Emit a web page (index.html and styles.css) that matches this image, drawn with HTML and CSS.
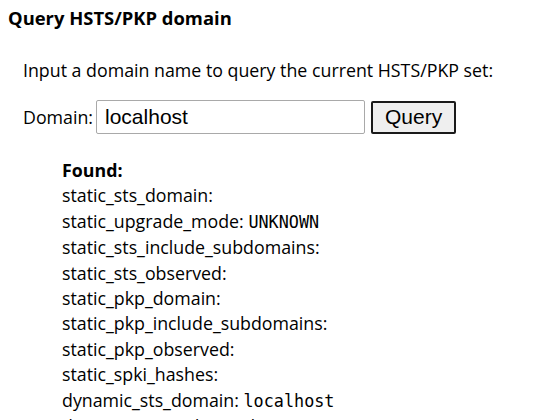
FILE: index.html
```html
<!DOCTYPE html>
<html>
<head>
<meta charset="utf-8">
<link rel="stylesheet" href="styles.css">
</head>
<body>
<h3 class="title">Query HSTS/PKP domain</h3>
<div class="section">
  <p class="intro">Input a domain name to query the current HSTS/PKP set:</p>
  <form class="query-form">
    <label class="label" for="domain">Domain:</label>
    <input class="domain-input" id="domain" type="text" value="localhost">
    <button class="query-btn" type="button">Query</button>
  </form>
  <div class="results">
    <div class="found">Found:</div>
    <div class="row">static_sts_domain:</div>
    <div class="row">static_upgrade_mode: <code class="mono">UNKNOWN</code></div>
    <div class="row">static_sts_include_subdomains:</div>
    <div class="row">static_sts_observed:</div>
    <div class="row">static_pkp_domain:</div>
    <div class="row">static_pkp_include_subdomains:</div>
    <div class="row">static_pkp_observed:</div>
    <div class="row">static_spki_hashes:</div>
    <div class="row">dynamic_sts_domain: <code class="mono">localhost</code></div>
    <div class="row">dynamic_upgrade_mode: <code class="mono">FORCE_HTTPS</code></div>
  </div>
</div>
</body>
</html>
```
FILE: styles.css
```css
html, body {
  margin: 0;
  padding: 0;
  background: #fff;
  overflow: hidden;
}
body {
  margin: 0 8px;
  font-family: "Open Sans", "Noto Sans", sans-serif;
  color: #000;
  font-size: 17.8px;
}
.title {
  margin: 0;
  padding-top: 6px;
  font-size: 18.4px;
  line-height: 24px;
  font-weight: 700;
  letter-spacing: 0;
}
.section {
  padding-left: 15px;
}
.intro {
  margin: 0;
  margin-top: 27px;
  line-height: 26px;
}
.query-form {
  display: flex;
  align-items: center;
  margin-top: 17px;
}
.label {
  margin-right: 3px;
}
.domain-input {
  box-sizing: border-box;
  width: 269px;
  height: 34px;
  margin: 0;
  padding: 0 8px;
  border: 1px solid #a9a9a9;
  border-radius: 2px;
  font-family: "Liberation Sans", Arial, sans-serif;
  font-size: 21px;
  color: #000;
}
.query-btn {
  box-sizing: border-box;
  height: 33px;
  margin: 0 0 0 6px;
  padding: 0 12px;
  border: 2px solid #1a1a1a;
  border-radius: 2px;
  background: #efefef;
  font-family: "Liberation Sans", Arial, sans-serif;
  font-size: 21px;
  color: #000;
}
.results {
  margin-top: 24px;
  margin-left: 39px;
}
.found {
  font-weight: 700;
  line-height: 25.4px;
}
.row {
  line-height: 25.4px;
  white-space: nowrap;
}
.mono {
  font-family: "DejaVu Sans Mono", monospace;
  font-size: 16.8px;
}
```
